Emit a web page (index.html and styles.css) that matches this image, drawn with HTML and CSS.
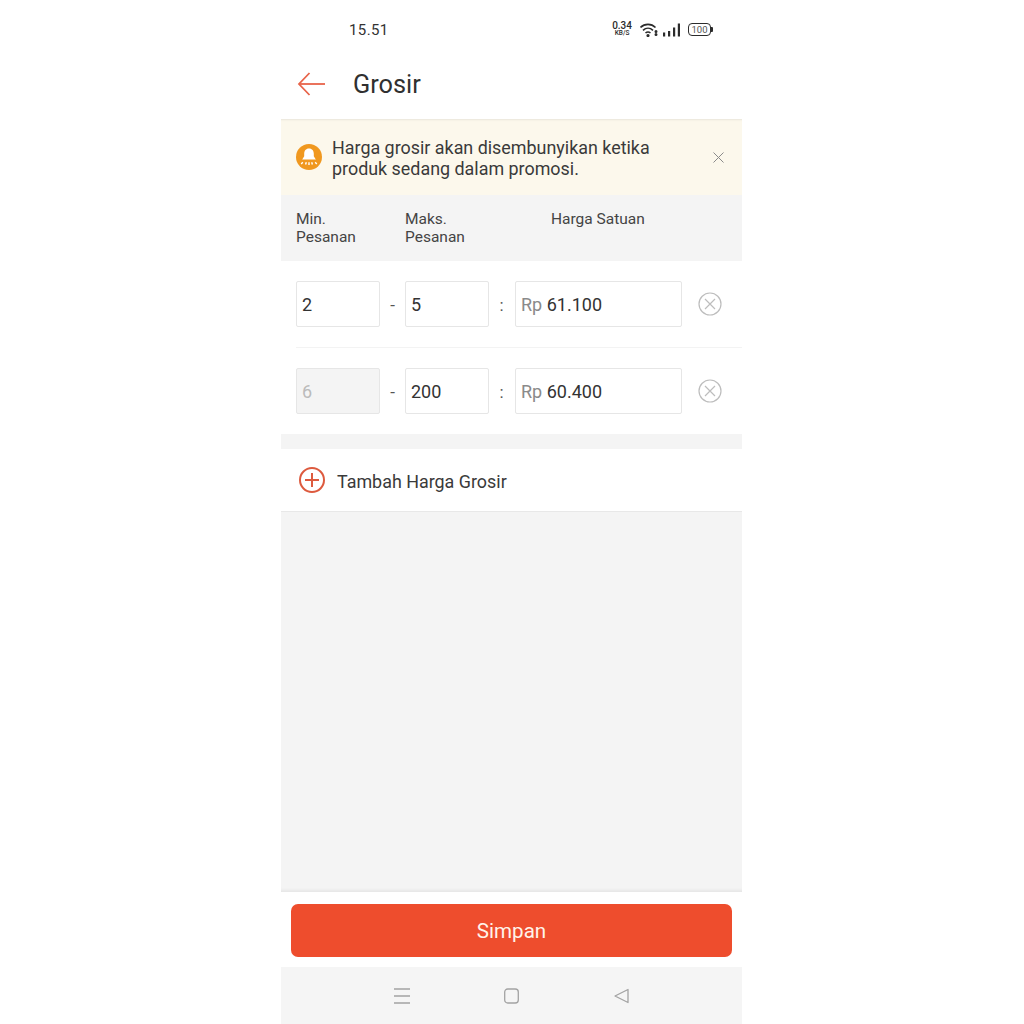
FILE: index.html
```html
<!DOCTYPE html>
<html>
<head>
  <title>Grosir</title>
  <link rel="stylesheet" href="styles.css">
</head>
<body>
  <div class="phone">
    <div class="status-bar">
      <span class="clock">15.51</span>
      <div class="status-icons">
        <div class="speed"><span>0.34</span><span class="speed-unit">KB/S</span></div>
        <svg class="wifi" width="18" height="14" viewBox="0 0 18 14" fill="none" stroke="#2b2b2b" stroke-width="1.6">
          <path d="M.5 4.500c4.200-4.200 10.800-4.200 15 0"/>
          <path d="M3 7.300c3-2.800 7-2.800 10 0"/>
          <path d="M5.500 10c1.600-1.300 3.400-1.300 5 0"/>
          <circle cx="8" cy="12.500" r="0.800" fill="#2b2b2b"/>
          <circle cx="16" cy="8.500" r="0.700" fill="#2b2b2b"/>
          <circle cx="16" cy="11.500" r="0.700" fill="#2b2b2b"/>
        </svg>
        <svg width="17" height="14" viewBox="0 0 17 14" fill="#2b2b2b">
          <rect x="0" y="9.500" width="2.200" height="4"/>
          <rect x="5" y="8" width="2.200" height="5.500"/>
          <rect x="10" y="4.500" width="2.200" height="9"/>
          <rect x="14.800" y="0.500" width="2.200" height="13"/>
        </svg>
        <div class="battery"><span class="battery-body">100</span><span class="battery-tip"></span></div>
      </div>
    </div>

    <header class="top-bar">
      <svg class="back" width="28" height="26" viewBox="0 0 28 26" fill="none" stroke="#e8644a" stroke-width="1.800">
        <path d="M28 12H2"/>
        <path d="M12.500 1L2 12l10.500 11"/>
      </svg>
      <h1>Grosir</h1>
    </header>

    <div class="notice">
      <svg class="bell" width="26" height="26" viewBox="0 0 26 26">
        <circle cx="13" cy="13" r="13" fill="#f0981f"/>
        <path d="M13 4.500c-3.200 0-4.800 2.400-4.800 5.200v2.600L6.200 15.600h13.600l-2-3.300V9.700c0-2.800-1.600-5.200-4.800-5.200z" fill="#fff"/>
        <path d="M6.800 18.300l-1.600 1.600M10.300 18.300l-.7 2.200M15.700 18.300l.7 2.200M19.200 18.300l1.600 1.600M13 18.300v2.700" stroke="#fff" stroke-width="1.400" fill="none"/>
      </svg>
      <p>Harga grosir akan disembunyikan ketika produk sedang dalam promosi.</p>
      <svg class="notice-close" width="11" height="11" viewBox="0 0 11 11" stroke="#8a8a8a" stroke-width="1" fill="none">
        <path d="M.5.500l10 10M10.500.500l-10 10"/>
      </svg>
    </div>

    <div class="table-head">
      <span class="col-min">Min.<br>Pesanan</span>
      <span class="col-max">Maks.<br>Pesanan</span>
      <span class="col-price">Harga Satuan</span>
    </div>

    <div class="tiers">
      <div class="tier">
        <div class="field qty">2</div>
        <span class="sep">-</span>
        <div class="field qty">5</div>
        <span class="sep">:</span>
        <div class="field price"><span class="currency">Rp</span> 61.100</div>
        <svg class="remove" width="24" height="24" viewBox="0 0 24 24" fill="none" stroke="#bdbdbd" stroke-width="1.200">
          <circle cx="12" cy="12" r="11"/>
          <path d="M7 7l10 10M17 7L7 17"/>
        </svg>
      </div>
      <div class="tier">
        <div class="field qty disabled">6</div>
        <span class="sep">-</span>
        <div class="field qty">200</div>
        <span class="sep">:</span>
        <div class="field price"><span class="currency">Rp</span> 60.400</div>
        <svg class="remove" width="24" height="24" viewBox="0 0 24 24" fill="none" stroke="#bdbdbd" stroke-width="1.200">
          <circle cx="12" cy="12" r="11"/>
          <path d="M7 7l10 10M17 7L7 17"/>
        </svg>
      </div>
    </div>

    <div class="add-row">
      <svg width="26" height="26" viewBox="0 0 26 26" fill="none" stroke="#dd5a3e" stroke-width="2">
        <circle cx="13" cy="13" r="12"/>
        <path d="M13 6v14M6 13h14"/>
      </svg>
      <span>Tambah Harga Grosir</span>
    </div>

    <div class="spacer"></div>

    <div class="footer">
      <button class="save">Simpan</button>
    </div>

    <nav class="nav-bar">
      <svg width="16" height="16" viewBox="0 0 16 16" stroke="#a3a3a3" stroke-width="1.300" fill="none">
        <path d="M0 1h16M0 8h16M0 15h16"/>
      </svg>
      <svg width="15" height="16" viewBox="0 0 15 16" stroke="#a3a3a3" stroke-width="1.300" fill="none">
        <rect x="0.700" y="1" width="13.600" height="14" rx="3"/>
      </svg>
      <svg class="nav-back" width="15" height="16" viewBox="0 0 15 16" stroke="#a3a3a3" stroke-width="1.300" fill="none">
        <path d="M14 1.500v13L1 8z" stroke-linejoin="round"/>
      </svg>
    </nav>
  </div>
</body>
</html>
```

FILE: styles.css
```css
/* Page and phone frame */
body {
  margin: 0;
  background-color: #fff;
  font-family: Roboto, "Liberation Sans", sans-serif;
  color: #333;
}

.phone {
  width: 461px;
  height: 1024px;
  margin-left: 281px;
  display: flex;
  flex-direction: column;
  background-color: #f4f4f4;
}

/* Status bar */
.status-bar {
  height: 52px;
  padding: 0 29px 0 68px;
  box-sizing: border-box;
  display: flex;
  align-items: flex-start;
  justify-content: space-between;
  background-color: #fff;
}

.clock {
  margin-top: 21px;
  font-size: 15px;
  line-height: 19px;
  letter-spacing: 0.4px;
}

.status-icons {
  display: flex;
  align-items: center;
  gap: 6px;
  margin-top: 22px;
  height: 15px;
}

.speed {
  display: flex;
  flex-direction: column;
  align-items: center;
  margin-right: 2px;
  font-size: 10px;
  font-weight: 500;
  line-height: 8px;
  color: #2b2b2b;
}

.speed-unit {
  font-size: 6.500px;
  line-height: 7px;
}

.wifi {
  margin-right: -1px;
}

.battery {
  display: flex;
  align-items: center;
  margin-left: 2px;
}

.battery-body {
  width: 21px;
  height: 11px;
  border: 1px solid #2b2b2b;
  border-radius: 4px;
  font-size: 9.500px;
  line-height: 11px;
  text-align: center;
  color: #555;
}

.battery-tip {
  width: 2px;
  height: 5px;
  background-color: #2b2b2b;
  border-radius: 0 1px 1px 0;
}

/* Header */
.top-bar {
  height: 67px;
  padding: 0 0 2px 16px;
  box-sizing: border-box;
  display: flex;
  align-items: center;
  gap: 28px;
  background-color: #fff;
}

.top-bar h1 {
  margin: 0;
  font-size: 25.300px;
  font-weight: 400;
  color: #303030;
}

/* Notice banner */
.notice {
  height: 76px;
  padding: 0 16px 0 15px;
  box-sizing: border-box;
  display: flex;
  align-items: center;
  background-color: #fcf8ec;
  box-shadow: inset 0 3px 2px -2px rgba(0, 0, 0, 0.08);
}

.notice p {
  width: 350px;
  margin: 0 0 0 10px;
  padding-top: 2px;
  font-size: 17.900px;
  line-height: 21px;
  color: #3a3a3a;
}

.notice-close {
  margin-left: 31px;
}

/* Column titles */
.table-head {
  height: 66px;
  padding: 15px 0 0 15px;
  box-sizing: border-box;
  display: flex;
  font-size: 15.500px;
  line-height: 18px;
  color: #444;
}

.col-min {
  width: 109px;
}

.col-max {
  width: 146px;
}

/* Tier rows */
.tiers {
  background-color: #fff;
  padding-left: 15px;
}

.tier {
  height: 86px;
  display: flex;
  align-items: center;
}

.tier + .tier {
  border-top: 1px solid #f3f3f3;
}

.field {
  height: 46px;
  box-sizing: border-box;
  border: 1px solid #e6e6e6;
  border-radius: 2px;
  padding: 1px 0 0 5px;
  display: flex;
  align-items: center;
  font-size: 18px;
  color: #333;
  white-space: pre;
}

.qty {
  width: 84px;
}

.price {
  width: 167px;
  margin-left: 1px;
}

.disabled {
  background-color: #f4f4f4;
  color: #bbb;
}

.currency {
  color: #8a8a8a;
}

.sep {
  width: 25px;
  padding-top: 2px;
  text-align: center;
  font-size: 17px;
  color: #555;
}

.remove {
  margin-left: 16px;
}

/* Add row */
.add-row {
  height: 63px;
  margin-top: 15px;
  padding-left: 18px;
  box-sizing: border-box;
  display: flex;
  align-items: center;
  gap: 12px;
  background-color: #fff;
  border-bottom: 1px solid #e8e8e8;
  font-size: 17.900px;
  color: #3a3a3a;
}

.add-row span {
  padding-top: 3px;
}

.spacer {
  flex: 1;
  box-shadow: inset 0 -4px 3px -2px rgba(0, 0, 0, 0.06);
}

/* Save button */
.footer {
  height: 75px;
  padding: 12px 10px 0;
  box-sizing: border-box;
  background-color: #fff;
}

.save {
  display: block;
  width: 441px;
  height: 53px;
  padding-top: 2px;
  border: none;
  border-radius: 7px;
  background-color: #ee4d2d;
  color: #fff3ea;
  font-family: Roboto, "Liberation Sans", sans-serif;
  font-size: 20.600px;
}

/* Android nav bar */
.nav-bar {
  height: 57px;
  display: flex;
  align-items: center;
  justify-content: center;
  gap: 94px;
  background-color: #f5f5f5;
}

.nav-back {
  margin-left: 1px;
}
```
